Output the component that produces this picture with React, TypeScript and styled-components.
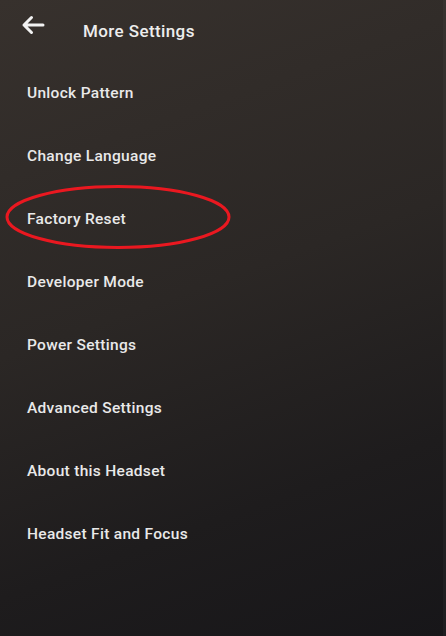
import React from "react";
import styled, { createGlobalStyle } from "styled-components";

const GlobalStyle = createGlobalStyle`
  html, body {
    margin: 0;
    padding: 0;
    background: #1c1a1b;
  }
  * {
    box-sizing: border-box;
  }
`;

const items = [
  "Unlock Pattern",
  "Change Language",
  "Factory Reset",
  "Developer Mode",
  "Power Settings",
  "Advanced Settings",
  "About this Headset",
  "Headset Fit and Focus",
];

export default function App() {
  return (
    <>
      <GlobalStyle />
      <Screen>
        <Header>
          <BackButton aria-label="Back">
            <svg width="24" height="20" viewBox="0 0 24 20" fill="none">
              <path
                d="M22 10H3M10.5 2.5L3 10l7.5 7.5"
                stroke="#f2f2f2"
                strokeWidth="3"
                strokeLinecap="round"
                strokeLinejoin="round"
              />
            </svg>
          </BackButton>
          <Title>More Settings</Title>
        </Header>
        <List>
          {items.map((label) => (
            <Item key={label}>{label}</Item>
          ))}
        </List>
        <Highlight width="228" height="66" viewBox="0 0 228 66">
          <ellipse
            cx="114"
            cy="33"
            rx="111"
            ry="30.5"
            fill="none"
            stroke="#ea1820"
            strokeWidth="3"
          />
        </Highlight>
        <EdgeStrip />
      </Screen>
    </>
  );
}

const Screen = styled.div`
  position: relative;
  width: 446px;
  height: 636px;
  overflow: hidden;
  background: linear-gradient(160deg, #37312d 0%, #2b2725 45%, #1e1c1d 75%, #171619 100%);
  font-family: Roboto, "Noto Sans", Arial, sans-serif;
  color: #ececec;
`;

const Header = styled.div`
  display: flex;
  align-items: center;
  height: 62px;
  padding-left: 21px;
`;

const BackButton = styled.button`
  display: flex;
  align-items: center;
  padding: 0;
  border: 0;
  background: none;
  margin-bottom: 13px;
  cursor: pointer;
`;

const Title = styled.h1`
  margin: 0 0 0 38px;
  font-size: 17px;
  font-weight: 500;
  letter-spacing: 0.4px;
  color: #ededed;
`;

const List = styled.ul`
  list-style: none;
  margin: 0;
  padding: 0;
`;

const Item = styled.li`
  display: flex;
  align-items: center;
  height: 62.9px;
  padding-left: 27px;
  font-size: 15.5px;
  font-weight: 500;
  letter-spacing: 0.3px;
  color: #e9e9e9;
`;

const Highlight = styled.svg`
  position: absolute;
  left: 4px;
  top: 184px;
`;

const EdgeStrip = styled.div`
  position: absolute;
  top: 0;
  right: 0;
  width: 3px;
  height: 100%;
  background: rgba(255, 255, 255, 0.03);
`;
